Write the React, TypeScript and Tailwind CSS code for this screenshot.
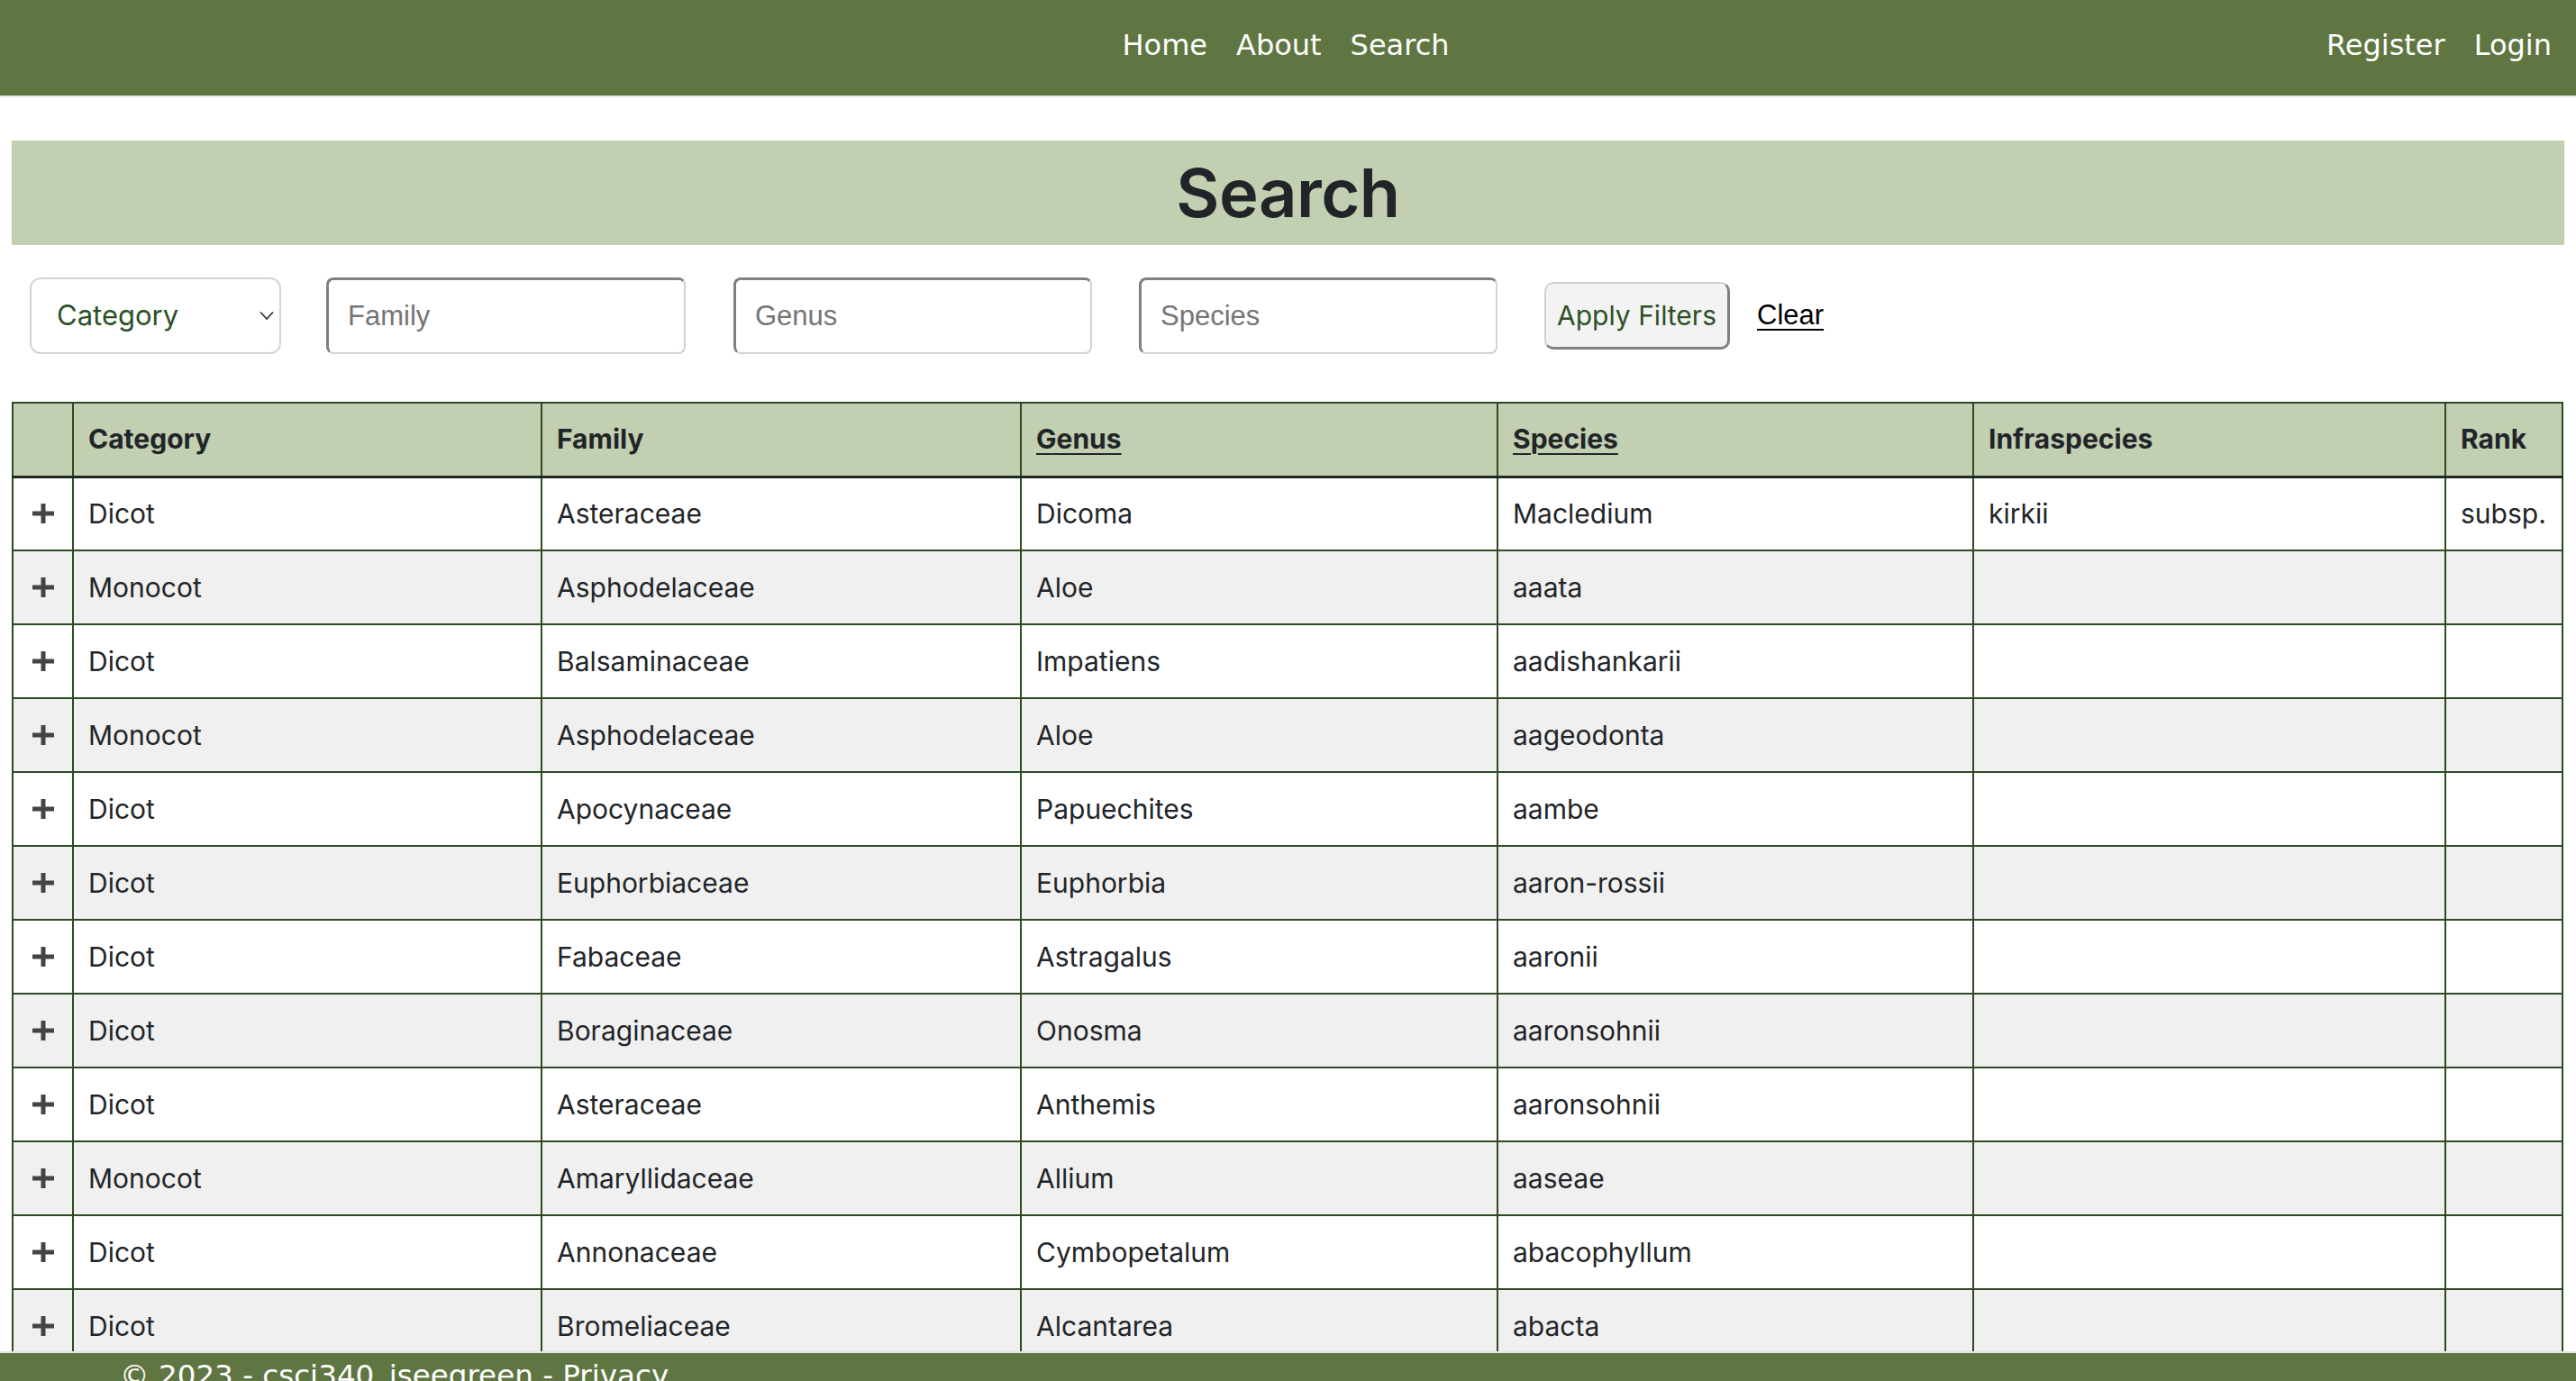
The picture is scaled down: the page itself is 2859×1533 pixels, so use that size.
import React from "react";

const rows: string[][] = [
  ["Dicot", "Asteraceae", "Dicoma", "Macledium", "kirkii", "subsp."],
  ["Monocot", "Asphodelaceae", "Aloe", "aaata", "", ""],
  ["Dicot", "Balsaminaceae", "Impatiens", "aadishankarii", "", ""],
  ["Monocot", "Asphodelaceae", "Aloe", "aageodonta", "", ""],
  ["Dicot", "Apocynaceae", "Papuechites", "aambe", "", ""],
  ["Dicot", "Euphorbiaceae", "Euphorbia", "aaron-rossii", "", ""],
  ["Dicot", "Fabaceae", "Astragalus", "aaronii", "", ""],
  ["Dicot", "Boraginaceae", "Onosma", "aaronsohnii", "", ""],
  ["Dicot", "Asteraceae", "Anthemis", "aaronsohnii", "", ""],
  ["Monocot", "Amaryllidaceae", "Allium", "aaseae", "", ""],
  ["Dicot", "Annonaceae", "Cymbopetalum", "abacophyllum", "", ""],
  ["Dicot", "Bromeliaceae", "Alcantarea", "abacta", "", ""],
  ["Dicot", "Asteraceae", "Abrotanella", "abbreviata", "", ""],
];

const Plus = () => (
  <svg width="24" height="22" viewBox="0 0 24 22" className="mx-auto block">
    <rect x="0" y="8.5" width="24" height="5" fill="#444" />
    <rect x="9.5" y="0" width="5" height="22" fill="#444" />
  </svg>
);

const inputCls =
  "h-[85px] rounded-[8px] border-t-[3px] border-l-[3px] border-b-2 border-r-2 border-t-[#7f7f7f] border-l-[#7f7f7f] border-b-[#d2d2d2] border-r-[#d2d2d2] bg-white pl-[21px] text-[31px] text-[#757575] flex items-center [font-family:'Liberation_Sans',Arial,sans-serif]";

export default function App() {
  const td = "border-2 border-[#2e4a25] pl-[16px] pr-2 text-left align-middle";
  return (
    <div className="relative h-screen w-full overflow-hidden bg-white [font-family:Inter,'Liberation_Sans',sans-serif] text-[#212529]">
      {/* Navbar */}
      <nav className="h-[108px] pb-[6px] bg-[#5f7642] border-b-2 border-[#e4e4e4] relative flex items-center [font-family:'DejaVu_Sans',Verdana,sans-serif] text-[32px] text-white">
        <div className="flex-1" />
        <div className="flex items-center ml-[6px]">
          <span className="px-[16px]">Home</span>
          <span className="px-[16px]">About</span>
          <span className="px-[16px]">Search</span>
        </div>
        <div className="flex-1 flex justify-end items-center pr-[11px]">
          <span className="px-[16px]">Register</span>
          <span className="px-[16px]">Login</span>
        </div>
      </nav>

      <main className="px-[13px] pt-[48px]">
        {/* Banner */}
        <div className="h-[116px] bg-[#c2cfb0] flex items-center justify-center">
          <h1 className="text-[74px] font-semibold leading-none text-[#212529] tracking-[-0.5px]">Search</h1>
        </div>

        {/* Filters */}
        <div className="mt-[36px] flex items-center pl-[20px]">
          <div className="w-[279px] h-[85px] rounded-[12px] border-2 border-[#d4d4d4] bg-white flex items-center justify-between pl-[28px] pr-[6px] text-[31px] text-[#2d5027]">
            <span>Category</span>
            <svg width="16" height="11" viewBox="0 0 16 11">
              <polyline points="1,1.5 8,9 15,1.5" fill="none" stroke="#333" strokeWidth="1.8" />
            </svg>
          </div>
          <div className={`ml-[50px] w-[399px] ${inputCls}`}>Family</div>
          <div className={`ml-[53px] w-[398px] ${inputCls}`}>Genus</div>
          <div className={`ml-[52px] w-[398px] ${inputCls}`}>Species</div>
          <button className="ml-[52px] w-[206px] h-[75px] rounded-[10px] bg-[#f3f3f3] border-t-2 border-l-2 border-b-[3px] border-r-[3px] border-t-[#d2d2d2] border-l-[#d2d2d2] border-b-[#808080] border-r-[#808080] text-[30px] text-[#2d5027] flex items-center justify-center">
            Apply Filters
          </button>
          <span className="ml-[30px] text-[31px] text-black underline underline-offset-[5px] decoration-2 [font-family:'Liberation_Sans',Arial,sans-serif]">
            Clear
          </span>
        </div>

        {/* Table */}
        <table className="mt-[53px] w-[2830px] table-fixed border-collapse text-[30px]">
          <colgroup>
            <col className="w-[67px]" />
            <col className="w-[520px]" />
            <col className="w-[532px]" />
            <col className="w-[529px]" />
            <col className="w-[528px]" />
            <col className="w-[524px]" />
            <col className="w-[130px]" />
          </colgroup>
          <thead>
            <tr className="bg-[#c2cfb0] h-[82px]">
              <th className={`${td} border-b-[3px] border-b-[#1f2a1c]`}></th>
              <th className={`${td} font-bold border-b-[3px] border-b-[#1f2a1c]`}>Category</th>
              <th className={`${td} font-bold border-b-[3px] border-b-[#1f2a1c]`}>Family</th>
              <th className={`${td} font-bold border-b-[3px] border-b-[#1f2a1c]`}>
                <span className="underline underline-offset-[5px] decoration-2">Genus</span>
              </th>
              <th className={`${td} font-bold border-b-[3px] border-b-[#1f2a1c]`}>
                <span className="underline underline-offset-[5px] decoration-2">Species</span>
              </th>
              <th className={`${td} font-bold border-b-[3px] border-b-[#1f2a1c]`}>Infraspecies</th>
              <th className={`${td} font-bold border-b-[3px] border-b-[#1f2a1c]`}>Rank</th>
            </tr>
          </thead>
          <tbody>
            {rows.map((r, i) => (
              <tr key={i} className={`h-[82px] ${i % 2 === 1 ? "bg-[#f0f0f0]" : "bg-white"}`}>
                <td className="border-2 border-[#2e4a25] align-middle">
                  <Plus />
                </td>
                {r.map((c, j) => (
                  <td key={j} className={td}>
                    {c}
                  </td>
                ))}
              </tr>
            ))}
          </tbody>
        </table>
      </main>

      {/* Footer */}
      <footer className="absolute bottom-0 left-0 right-0 h-[33px] overflow-hidden bg-[#5f7642] border-t-2 border-[#e4e4e4] [font-family:'DejaVu_Sans',Verdana,sans-serif] text-[32.6px] leading-none text-white pl-[133px] pt-[9px] whitespace-nowrap">
        © 2023 - csci340_iseegreen - Privacy
      </footer>
    </div>
  );
}
